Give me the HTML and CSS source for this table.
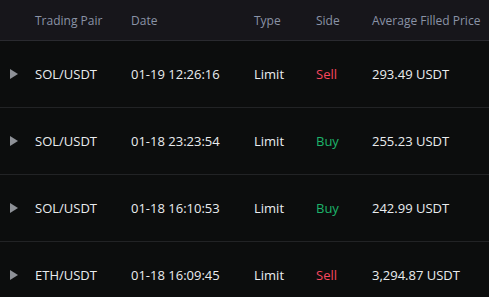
FILE: index.html
```html
<!DOCTYPE html>
<html>
<head>
<meta charset="utf-8">
<link rel="stylesheet" href="styles.css">
</head>
<body>
<div class="table">
  <div class="row head">
    <div class="c c-arrow"></div>
    <div class="c c-pair">Trading Pair</div>
    <div class="c c-date">Date</div>
    <div class="c c-type">Type</div>
    <div class="c c-side">Side</div>
    <div class="c c-price">Average Filled Price</div>
  </div>
  <div class="row">
    <div class="c c-arrow"><span class="tri"></span></div>
    <div class="c c-pair">SOL/USDT</div>
    <div class="c c-date">01-19 12:26:16</div>
    <div class="c c-type">Limit</div>
    <div class="c c-side sell">Sell</div>
    <div class="c c-price">293.49 USDT</div>
  </div>
  <div class="row">
    <div class="c c-arrow"><span class="tri"></span></div>
    <div class="c c-pair">SOL/USDT</div>
    <div class="c c-date">01-18 23:23:54</div>
    <div class="c c-type">Limit</div>
    <div class="c c-side buy">Buy</div>
    <div class="c c-price">255.23 USDT</div>
  </div>
  <div class="row">
    <div class="c c-arrow"><span class="tri"></span></div>
    <div class="c c-pair">SOL/USDT</div>
    <div class="c c-date">01-18 16:10:53</div>
    <div class="c c-type">Limit</div>
    <div class="c c-side buy">Buy</div>
    <div class="c c-price">242.99 USDT</div>
  </div>
  <div class="row">
    <div class="c c-arrow"><span class="tri"></span></div>
    <div class="c c-pair">ETH/USDT</div>
    <div class="c c-date">01-18 16:09:45</div>
    <div class="c c-type">Limit</div>
    <div class="c c-side sell">Sell</div>
    <div class="c c-price">3,294.87 USDT</div>
  </div>
</div>
</body>
</html>
```
FILE: styles.css
```css
html, body {
  margin: 0;
  padding: 0;
  background: #0c0d0d;
  width: 489px;
  height: 297px;
  overflow: hidden;
}
.table {
  font-family: "Open Sans", "Noto Sans", sans-serif;
  color: #eaecef;
}
.row {
  display: grid;
  grid-template-columns: 35px 96px 123px 62px 56px 1fr;
  align-items: center;
  height: 66px;
  border-bottom: 1px solid #222325;
  font-size: 13px;
  white-space: nowrap;
}
.row.head {
  height: 40px;
  background: #17161b;
  border-bottom: 1px solid #2a2a2f;
  color: #8a93a6;
  font-size: 12px;
}
.c-arrow {
  display: flex;
  align-items: center;
  padding-left: 10px;
}
.tri {
  width: 0;
  height: 0;
  border-top: 5px solid transparent;
  border-bottom: 5px solid transparent;
  border-left: 8px solid #8e9197;
}
.sell { color: #f6465d; }
.buy { color: #1db36a; }
```
